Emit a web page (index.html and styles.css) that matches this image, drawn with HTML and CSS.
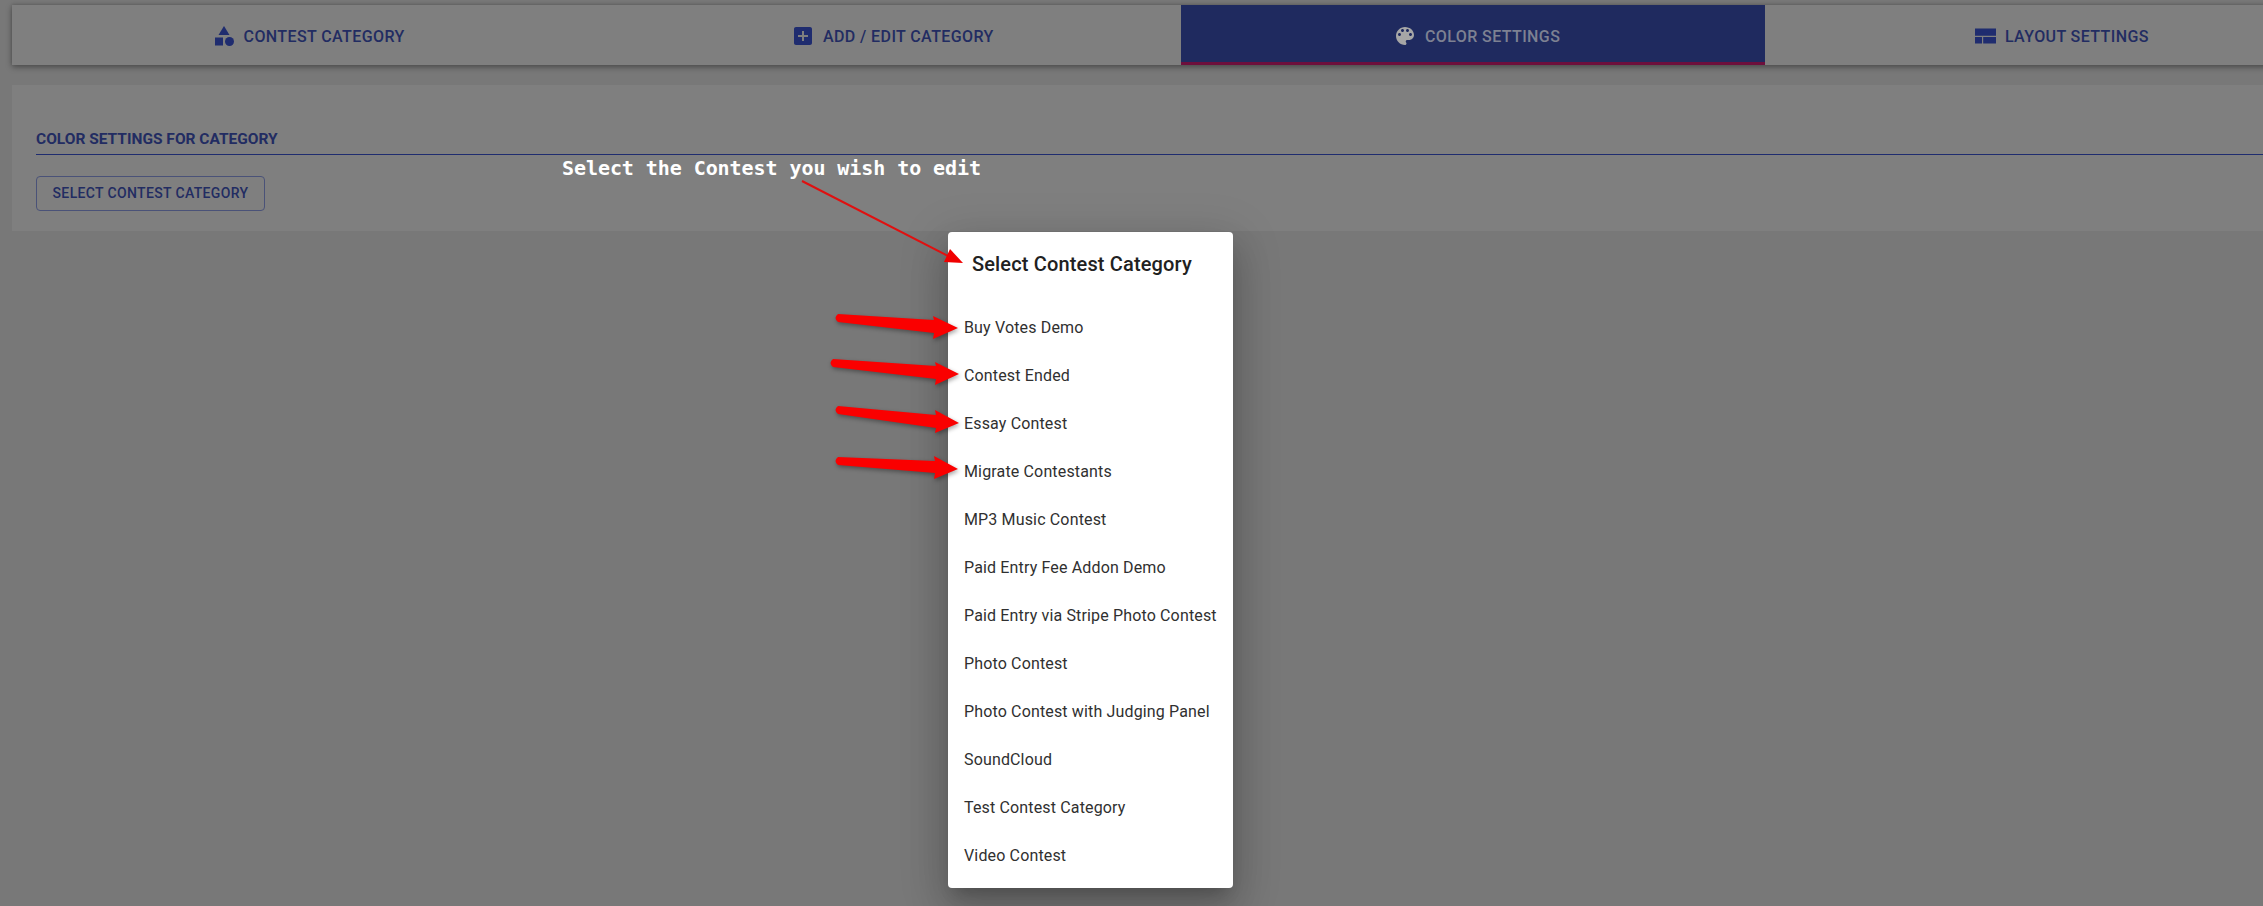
FILE: index.html
```html
<!DOCTYPE html>
<html lang="en">
<head>
<meta charset="utf-8">
<title>Color Settings</title>
<link rel="stylesheet" href="styles.css">
</head>
<body>
<main class="page">
  <nav class="tabs">
    <a class="tab"><svg class="icon" viewBox="0 0 24 24"><path d="M12 2l-5.500 9h11z"/><circle cx="17.500" cy="17.500" r="4.500"/><path d="M3 13.500h8v8H3z"/></svg>CONTEST CATEGORY</a>
    <a class="tab"><svg class="icon" viewBox="0 0 24 24"><path d="M19 3H5c-1.110 0-2 .9-2 2v14c0 1.100.89 2 2 2h14c1.100 0 2-.9 2-2V5c0-1.100-.9-2-2-2zm-2 10h-4v4h-2v-4H7v-2h4V7h2v4h4v2z"/></svg>ADD / EDIT CATEGORY</a>
    <a class="tab tab-active"><svg class="icon" viewBox="0 0 24 24"><path d="M12 3c-4.970 0-9 4.030-9 9s4.030 9 9 9c.83 0 1.500-.67 1.500-1.500 0-.39-.15-.74-.39-1.010-.23-.26-.38-.61-.38-.99 0-.83.67-1.500 1.500-1.500H16c2.760 0 5-2.240 5-5 0-4.420-4.030-8-9-8zm-5.500 9c-.83 0-1.500-.67-1.500-1.500S5.670 9 6.500 9 8 9.670 8 10.500 7.330 12 6.500 12zm3-4C8.670 8 8 7.330 8 6.500S8.670 5 9.500 5s1.500.67 1.500 1.500S10.330 8 9.500 8zm5 0c-.83 0-1.500-.67-1.500-1.500S13.670 5 14.500 5s1.500.67 1.500 1.500S15.330 8 14.500 8zm3 4c-.83 0-1.500-.67-1.500-1.500S16.670 9 17.500 9s1.500.67 1.500 1.500-.67 1.500-1.500 1.500z"/></svg>COLOR SETTINGS</a>
    <a class="tab"><svg class="icon" viewBox="0 0 24 24"><path d="M2 4.500h21v7.300H2zM2 13h7v6.500H2zM10.200 13H23v6.500H10.200z"/></svg>LAYOUT SETTINGS</a>
  </nav>
  <section class="card">
    <h2 class="card-title">COLOR SETTINGS FOR CATEGORY</h2>
    <button class="outline-btn" type="button">SELECT CONTEST CATEGORY</button>
  </section>
</main>

<div class="dialog" role="dialog">
  <h3 class="dialog-title">Select Contest Category</h3>
  <ul class="dialog-list">
    <li>Buy Votes Demo</li>
    <li>Contest Ended</li>
    <li>Essay Contest</li>
    <li>Migrate Contestants</li>
    <li>MP3 Music Contest</li>
    <li>Paid Entry Fee Addon Demo</li>
    <li>Paid Entry via Stripe Photo Contest</li>
    <li>Photo Contest</li>
    <li>Photo Contest with Judging Panel</li>
    <li>SoundCloud</li>
    <li>Test Contest Category</li>
    <li>Video Contest</li>
  </ul>
</div>

<p class="note">Select the Contest you wish to edit</p>

<svg class="marks" viewBox="0 0 2263 906" aria-hidden="true">
  <path class="thin" d="M802 181L952 258"/>
  <path class="head" d="M950 249L963 263L944 262z"/>
  <g class="fat">
    <path d="M838 314L934 320L933 316L958 328L933 339L934 333L838 322Q833 318 838 314z"/>
    <path d="M833 359L936 366L935 362L959 374L935 385L936 379L833 367Q828 363 833 359z"/>
    <path d="M838 406L936 415L935 410L959 423L935 433L936 428L838 414Q833 410 838 406z"/>
    <path d="M838 457L935 461L934 456L958 469L934 479L935 473L838 465Q833 461 838 457z"/>
  </g>
</svg>
</body>
</html>
```
FILE: styles.css
```css
html, body {
  margin: 0;
  height: 100%;
  overflow: hidden;
  background: #787878;
  font-family: Roboto, "Liberation Sans", sans-serif;
}

.page {
  width: 2337px;
  padding: 5px 0 0 12px;
}

.tabs {
  display: flex;
  height: 60px;
  background: #7f7f7f;
  box-shadow: 0 2px 6px rgba(0, 0, 0, .4), 0 -1px 3px rgba(0, 0, 0, .1);
}

.tab {
  flex: 1;
  display: flex;
  align-items: center;
  justify-content: center;
  gap: 8px;
  padding: 2px 0 0 8px;
  box-sizing: border-box;
  color: #222c62;
  font-size: 16px;
  font-weight: 500;
  letter-spacing: .4px;
}

.icon {
  width: 24px;
  height: 24px;
  fill: #1f2c6f;
}

.tab-active {
  background: #1f2a5f;
  color: #7d8192;
  border-bottom: 3px solid #6d0f3c;
  padding-top: 5px;
}

.tab-active .icon {
  fill: #a6a6a6;
}

.card {
  margin-top: 20px;
  height: 146px;
  padding: 0 0 0 24px;
  box-sizing: border-box;
  background: #7f7f7f;
  display: flex;
  flex-direction: column;
  align-items: flex-start;
}

.card-title {
  box-sizing: border-box;
  width: 100%;
  margin: 43px 0 0;
  padding-bottom: 3px;
  border-bottom: 1px solid #1f2c6f;
  color: #222c62;
  font-size: 15.500px;
  line-height: 23px;
  font-weight: 700;
}

.outline-btn {
  margin-top: 21px;
  width: 229px;
  height: 35px;
  padding: 0 0 2px;
  background: transparent;
  border: 1px solid #4a5278;
  border-radius: 4px;
  color: #222c62;
  font: 500 14px Roboto, sans-serif;
  letter-spacing: .35px;
}

.dialog {
  position: absolute;
  left: 948px;
  top: 232px;
  width: 285px;
  height: 656px;
  background: #fff;
  border-radius: 4px;
  box-shadow: 0 11px 15px -7px rgba(0, 0, 0, .2), 0 24px 38px 3px rgba(0, 0, 0, .14), 0 9px 46px 8px rgba(0, 0, 0, .12);
}

.dialog-title {
  margin: 0;
  padding: 16px 24px 0;
  color: #212121;
  font-size: 20px;
  font-weight: 500;
  line-height: 32px;
  letter-spacing: .15px;
  white-space: nowrap;
}

.dialog-list {
  list-style: none;
  margin: 24px 0 0;
  padding: 0 0 0 16px;
  color: #303030;
  font-size: 16px;
  letter-spacing: .15px;
}

.dialog-list li {
  height: 48px;
  line-height: 48px;
  white-space: nowrap;
}

.note {
  position: absolute;
  left: 562px;
  top: 155px;
  margin: 0;
  color: #fff;
  font: 700 20px/26px "DejaVu Sans Mono", monospace;
  letter-spacing: -.07px;
  white-space: nowrap;
}

.marks {
  position: absolute;
  left: 0;
  top: 0;
  width: 2263px;
  height: 906px;
  pointer-events: none;
}

.thin {
  fill: none;
  stroke: #e01010;
  stroke-width: 2;
}

.head {
  fill: #f00000;
}

.fat {
  fill: #fa0000;
  filter: drop-shadow(1px 2px 2px rgba(0, 0, 0, .35));
}
```
